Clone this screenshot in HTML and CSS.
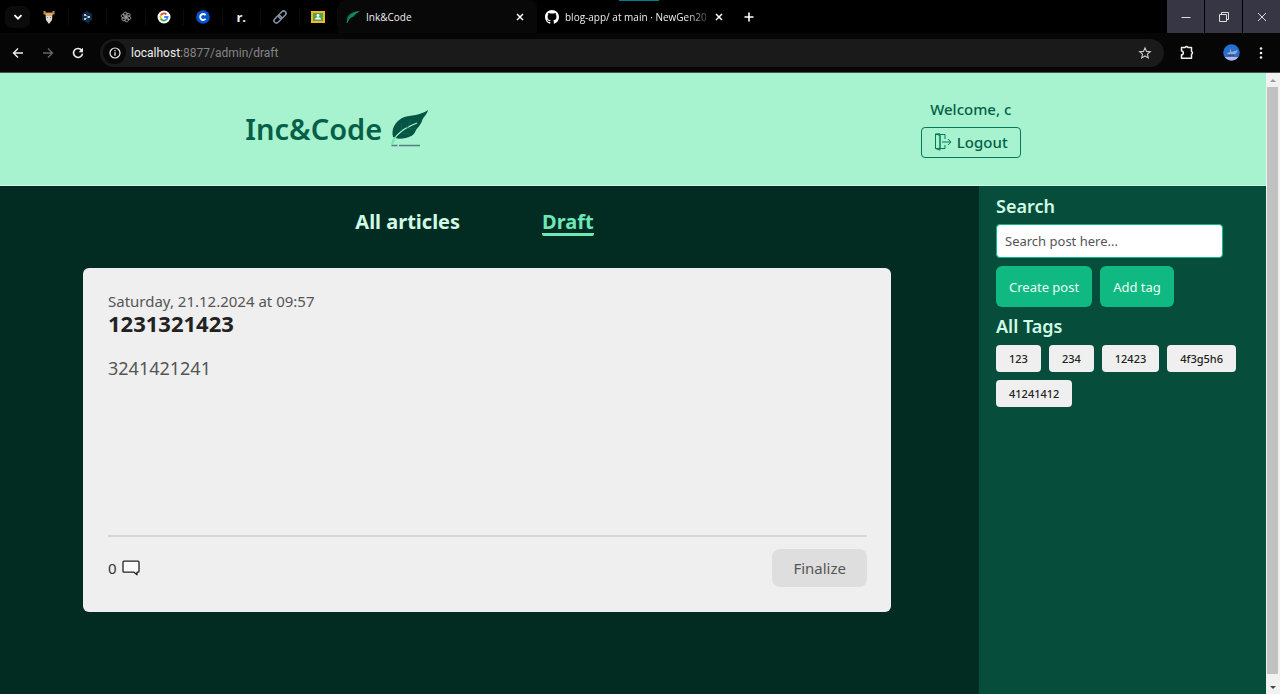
FILE: index.html
```
<!DOCTYPE html>
<html lang="en">
<head>
<meta charset="utf-8">
<title>Ink&amp;Code</title>
<link rel="stylesheet" href="styles.css">
</head>
<body>
<div class="browser">
  <div class="tabstrip">
    <div class="pinned">
      <button class="tab-search" aria-label="Search tabs"><svg width="10" height="10" viewBox="0 0 10 10"><path d="M1.500 3.200 5 6.700 8.500 3.200" fill="none" stroke="#fff" stroke-width="1.800"/></svg></button>
      <span class="pin"><svg width="14" height="14" viewBox="0 0 14 14"><path d="M2.500 1v2.500h9V1" fill="none" stroke="#c48a42" stroke-width="2"/><path d="M3.500 4h7L10 10l-3 4-3-4z" fill="#e0dad3"/><path d="M4 3h6v3H4z" fill="#dba96c"/><path d="M5 7h1v1H5zM8 7h1v1H8z" fill="#8c6c58"/></svg></span>
      <span class="pin"><svg width="12" height="14" viewBox="1 0 12 14"><path d="M2 4 7 1l5 3v6l-3 2v2l-3-2-4-2z" fill="#0f2b46"/><path d="m5 5 4 2-4 2" fill="none" stroke="#8fb5db" stroke-width=".8"/><circle cx="5" cy="5" r="1" fill="#e8f2ff"/><circle cx="9" cy="7" r="1" fill="#e8f2ff"/><circle cx="5" cy="9" r="1" fill="#e8f2ff"/></svg></span>
      <span class="pin"><svg width="10" height="10" viewBox="0 0 14 14"><g fill="none" stroke="#a8a8a8" stroke-width="1.200"><path id="petal" d="M7 7V3.200L9.700 1.700a2.500 2.500 0 0 1 2.600 3.900L9 7.500"/><use href="#petal" transform="rotate(60 7 7)"/><use href="#petal" transform="rotate(120 7 7)"/><use href="#petal" transform="rotate(180 7 7)"/><use href="#petal" transform="rotate(240 7 7)"/><use href="#petal" transform="rotate(300 7 7)"/></g></svg></span>
      <span class="pin"><svg width="14" height="14" viewBox="0 0 14 14"><circle cx="7" cy="7" r="6.500" fill="#fff"/><g fill="none" stroke-width="1.800"><path d="M9.500 4.400A3.600 3.600 0 0 0 3.900 5.200" stroke="#ea4335"/><path d="M3.900 5.200a3.600 3.600 0 0 0 0 3.600" stroke="#fbbc05"/><path d="M3.900 8.800a3.600 3.600 0 0 0 5.500.9" stroke="#34a853"/><path d="M9.400 9.700A3.600 3.600 0 0 0 10.600 7H7.200" stroke="#4285f4"/></g></svg></span>
      <span class="pin"><svg width="14" height="14" viewBox="0 0 14 14"><circle cx="7" cy="7" r="6.800" fill="#0056d2"/><path d="M9.600 8.800a3 3 0 1 1 0-3.600" fill="none" stroke="#fff" stroke-width="1.900"/></svg></span>
      <span class="pin pin-text">r.</span>
      <span class="pin"><svg width="14" height="14" viewBox="0 0 14 14"><g fill="none" stroke="#8595a5" stroke-width="1.500" transform="rotate(-45 7 7)"><rect x="-.5" y="4.600" width="8.500" height="4.800" rx="2.400"/><rect x="6" y="4.600" width="8.500" height="4.800" rx="2.400"/></g></svg></span>
      <span class="pin"><svg width="14" height="12" viewBox="0 0 14 12"><path fill="#f5ba18" d="M0 0h14v12H0z"/><path fill="#4fa55c" d="M2 2h10v8H2z"/><circle cx="7" cy="4.500" r="1.400" fill="#fff"/><path d="M4 8.500c0-3 6-3 6 0z" fill="#fff"/></svg></span>
    </div>
    <div class="tab active">
      <svg width="14" height="14" viewBox="0 0 14 14"><path d="M1 13C0 7 2 2 14 1c-2 2-4 2-5 4S6 7 4.500 8 2 10 1 13" fill="#0b7553"/><path d="M1 13C3 8 6 4 12 2" fill="none" stroke="#27b487" stroke-width=".7"/></svg>
      <span class="tab-title">Ink&amp;Code</span>
      <button class="tab-close" aria-label="Close Ink&amp;Code"><svg width="8" height="8" viewBox="0 0 8 8"><path d="m1 1 6 6M7 1 1 7" stroke="#fff" stroke-width="1.500"/></svg></button>
    </div>
    <div class="tab">
      <svg width="14" height="14" viewBox="0 0 16 16"><path fill="#fff" d="M8 0C3.580 0 0 3.580 0 8c0 3.540 2.290 6.530 5.470 7.590.4.070.55-.17.55-.38v-1.490c-2.010.37-2.530-.49-2.690-.94-.09-.23-.48-.94-.82-1.130-.28-.15-.68-.52-.01-.53.63-.01 1.080.58 1.230.82.72 1.210 1.870.87 2.330.66.070-.52.280-.87.510-1.070-1.780-.2-3.640-.89-3.640-3.950 0-.87.310-1.590.820-2.150-.08-.2-.36-1.020.080-2.120 0 0 .67-.21 2.200.82a7.600 7.600 0 0 1 4 0c1.530-1.040 2.200-.82 2.200-.82.440 1.100.160 1.920.080 2.120.510.560.820 1.270.820 2.150 0 3.070-1.870 3.750-3.650 3.950.290.250.540.730.540 1.480v2.200c0 .210.150.460.550.380A8 8 0 0 0 16 8c0-4.420-3.580-8-8-8"/></svg>
      <span class="tab-title faded">blog-app/ at main · NewGen20</span>
      <button class="tab-close" aria-label="Close blog-app"><svg width="8" height="8" viewBox="0 0 8 8"><path d="m1 1 6 6M7 1 1 7" stroke="#fff" stroke-width="1.500"/></svg></button>
    </div>
    <button class="new-tab" aria-label="New tab"><svg width="10" height="10" viewBox="0 0 10 10"><path d="M5 .5v9M.5 5h9" stroke="#fff" stroke-width="1.600"/></svg></button>
    <div class="window-buttons">
      <button aria-label="Minimize"><svg width="10" height="10" viewBox="0 0 10 10"><path d="M.5 5.500h9" stroke="#ddd"/></svg></button>
      <button aria-label="Restore"><svg width="10" height="10" viewBox="0 0 10 10"><path d="M.5 2.500h7v7h-7zM2.500 2.500v-2h7v7h-2" fill="none" stroke="#ddd"/></svg></button>
      <button aria-label="Close"><svg width="10" height="10" viewBox="0 0 10 10"><path d="m1 1 8 8M9 1 1 9" stroke="#ddd"/></svg></button>
    </div>
  </div>
  <div class="toolbar">
    <button class="tool" aria-label="Back"><svg width="12" height="12" viewBox="0 0 12 12"><path d="M11 6H1.500M6 1.500 1.500 6 6 10.500" fill="none" stroke="#eee" stroke-width="1.400"/></svg></button>
    <button class="tool" aria-label="Forward"><svg width="12" height="12" viewBox="0 0 12 12"><path d="M1 6h9.500M6 1.500 10.500 6 6 10.500" fill="none" stroke="#666" stroke-width="1.400"/></svg></button>
    <button class="tool" aria-label="Reload"><svg width="12" height="12" viewBox="0 0 12 12"><path d="M9.700 3.300A4.500 4.500 0 1 0 10.500 6.600" fill="none" stroke="#eee" stroke-width="1.600"/><path d="M11 .8v4.400H6.600z" fill="#eee"/></svg></button>
    <div class="address">
      <button class="site-info" aria-label="Site information"><svg width="12" height="12" viewBox="0 0 12 12"><circle cx="6" cy="6" r="5" fill="none" stroke="#eee" stroke-width="1.200"/><path d="M6 5.300v3.500M6 3v1.300" stroke="#eee" stroke-width="1.300"/></svg></button>
      <span class="url"><b>localhost</b>:8877/admin/draft</span>
      <button class="star" aria-label="Bookmark this page"><svg width="12" height="12" viewBox="0 0 12 12"><path d="m6 .9 1.500 3.500 3.800.3-2.900 2.500.9 3.700L6 9l-3.300 1.900.9-3.700L.7 4.700l3.800-.3z" fill="none" stroke="#ccc" stroke-width="1.100"/></svg></button>
    </div>
    <button class="extensions" aria-label="Extensions"><svg width="15" height="15" viewBox="0 0 15 15"><path d="M1.500 2.500h3.700a1.400 1.400 0 0 1 2.600 0h3.700v4a1.400 1.400 0 0 1 0 2.700v4h-10V9.700a1.700 1.700 0 0 0 0-3.600z" fill="none" stroke="#eee" stroke-width="1.500" stroke-linejoin="round"/></svg></button>
    <button class="profile" aria-label="Profile"><svg width="17" height="17" viewBox="0 0 17 17"><circle cx="8.500" cy="8.500" r="8.300" fill="#246fd0"/><path d="M1.800 13h13.400a8.200 8.200 0 0 1-13.400 0" fill="#c2b5dd"/><path d="m4 9 3-1V4l1.500 4L15 6l-2 3.500-3 1.500H5z" fill="#99a9c9"/><path d="M5 11h6" stroke="#24345c"/></svg></button>
    <button class="more" aria-label="Menu"><svg width="4" height="12" viewBox="0 0 4 12"><g fill="#eee"><circle cx="2" cy="1.500" r="1.300"/><circle cx="2" cy="6" r="1.300"/><circle cx="2" cy="10.500" r="1.300"/></g></svg></button>
  </div>
</div>
<div class="viewport">
  <div class="page">
    <header class="site-header">
      <div class="brand">
        <span>Inc&amp;Code</span>
        <svg width="40" height="40" viewBox="0 0 40 40"><path d="M3 28C1 20 5 13 12 9c6-3 18-2 26-8-1 5-5 7-6 11-2 5-4 6-6 9-2 6-7 7-10 8-5 1-10 1-13-1z" fill="#065443"/><path d="M3 32C8 23 15 19 27 14" fill="none" stroke="#a7f3d0" stroke-width="1.300"/><path d="m11 22 1-8m5 5 4-8m-9 13 7 1m-2-5 9-1" fill="none" stroke="#0b6d50" stroke-width=".8"/><path d="M4 28c-2 3-2 5-3 8l2-1c1-2 2-4 3-7z" fill="#6ee7b7"/><path d="M1.500 36.500h6M9 36.500h21" stroke="#587d82" stroke-width="1.600"/></svg>
      </div>
      <div class="user">
        <span>Welcome, c</span>
        <button class="logout"><svg width="18" height="18" viewBox="0 0 18 18"><path d="M6 1H1.500v14.500H6zM6 1l-4.500.5M1.500 15.500 6 17.200V2.500L1.500 1M6 1.500h5V6M11 12v3.500H6M8 9h9M14 6l3 3-3 3" fill="none" stroke="#047857" stroke-width="1"/></svg>Logout</button>
      </div>
    </header>
    <div class="columns">
      <main class="content">
        <nav class="views"><a href="#all">All articles</a><a href="#draft" class="current">Draft</a></nav>
        <article class="card">
          <time datetime="2024-12-21T09:57">Saturday, 21.12.2024 at 09:57</time>
          <h2>1231321423</h2>
          <p>3241421241</p>
          <footer class="card-footer">
            <button class="comments" aria-label="0 comments">0 <svg width="18" height="16" viewBox="0 0 18 16"><path d="M2 1.200h14q1 0 1 1v9q0 1-1 1h-1v2.600l-3-2.600H2q-1 0-1-1v-9q0-1 1-1z" fill="#fafafa" stroke="#222" stroke-width="1.300" stroke-linejoin="round"/></svg></button>
            <button class="finalize">Finalize</button>
          </footer>
        </article>
      </main>
      <aside class="sidebar">
        <label class="side-title" for="search">Search</label>
        <input class="search" id="search" type="text" placeholder="Search post here...">
        <div class="actions"><button>Create post</button><button>Add tag</button></div>
        <h3 class="side-title">All Tags</h3>
        <div class="tags"><button>123</button><button>234</button><button>12423</button><button>4f3g5h6</button><button>41241412</button></div>
      </aside>
    </div>
  </div>
  <div class="scrollbar" aria-hidden="true">
    <svg width="14" height="14" viewBox="0 0 14 14"><path d="m4 9 3-3 3 3z" fill="#999"/></svg>
    <span class="thumb"></span>
    <svg width="14" height="20" viewBox="0 0 14 20"><path d="m4 12 3 3 3-3z" fill="#444"/></svg>
  </div>
</div>
</body>
</html>
```
FILE: styles.css
```
* { box-sizing: border-box; }
body { margin: 0; min-height: 100vh; display: flex; flex-direction: column; font-family: "Noto Sans", sans-serif; background: #022c22; }
button { font: inherit; color: inherit; border: 0; padding: 0; background: none; }
h2, h3, p { margin: 0; }
svg { display: block; flex: none; overflow: visible; }

.browser { background: #060606; color: #eee; font-family: "Open Sans", "Noto Sans", sans-serif; border-bottom: 1px solid #41544c; }
.tabstrip { display: flex; height: 33px; background: linear-gradient(to right, transparent 619px, #007d8a 619px 659px, transparent 659px) top / 100% 1px no-repeat #000; }
.pinned { display: flex; align-items: center; width: 338px; padding-left: 5px; }
.tab-search { width: 25px; height: 22px; display: grid; place-items: center; border-radius: 7px; background: #0b0b0b; }
.pin { flex: 1; height: 16px; display: grid; place-items: center; border-right: 1px solid #0c0c0c; }
.pin-text { font: 700 13px/14px "Open Sans", sans-serif; }
.tab { display: flex; align-items: center; gap: 6px; width: 196px; margin-right: 2px; padding: 0 10px 0 6px; font-size: 10px; }
.tab.active { width: 199px; background: #080808; border-radius: 8px 8px 0 0; padding-left: 8px; }
.tab-title { flex: 1; white-space: nowrap; }
.faded { mask-image: linear-gradient(to right, #000 85%, #0004); }
.tab-close { width: 14px; height: 16px; display: grid; place-items: center; }
.new-tab { width: 24px; display: grid; place-items: center; }
.window-buttons { display: flex; gap: 1px; margin-left: auto; }
.window-buttons button { width: 37px; display: grid; place-items: center; background: #363645; }

.toolbar { display: flex; align-items: center; height: 39px; padding: 0 3px; }
.tool { width: 30px; height: 28px; display: grid; place-items: center; }
.address { flex: 1; display: flex; align-items: center; height: 28px; margin-left: 7px; border-radius: 14px; background: #1a1a1a; }
.site-info { width: 23px; height: 23px; margin: 0 5px 0 3px; display: grid; place-items: center; border-radius: 50%; background: #080808; }
.url { flex: 1; font: 12px Roboto, sans-serif; color: #858585; }
.url b { font-weight: 400; color: #eee; }
.star { margin-right: 13px; }
.extensions { width: 46px; display: grid; place-items: center; }
.profile { margin-left: 13px; }
.more { width: 32px; margin-left: 5px; display: grid; place-items: center; }

.viewport { flex: 1; display: flex; }
.page { flex: 1; display: flex; flex-direction: column; }
.site-header { display: flex; align-items: center; justify-content: space-around; min-height: 113px; color: #065f46; background: #a7f3d0; border-bottom: 1px solid #d1fae5; }
.brand { display: flex; align-items: center; gap: 8px; font-size: 29px; font-weight: 600; line-height: 40px; }
.user { display: flex; flex-direction: column; align-items: center; gap: 6px; padding-bottom: 4px; font-size: 15px; font-weight: 500; line-height: 24px; }
.logout { display: flex; align-items: center; gap: 5px; height: 31px; padding: 0 12px; border: 1px solid #047857; border-radius: 4px; }

.columns { flex: 1; display: flex; }
.content { flex: 1; padding: 0 88px 82px 83px; }
.views { display: flex; justify-content: center; gap: 82px; padding: 25px 25px 32px 0; font-size: 20px; font-weight: 700; line-height: 22px; color: #d1fae5; }
.views a { color: inherit; text-decoration: none; border-bottom: 3px solid transparent; border-radius: 2px; }
.views .current { color: #6ee7b7; border-color: #6ee7b7; }
.card { display: flex; flex-direction: column; min-height: 344px; padding: 22px 24px 25px 25px; color: #555; background: #efefef; border-radius: 6px; }
.card time { font-size: 15px; line-height: 22px; }
.card h2 { font-size: 22px; font-weight: 700; line-height: 22px; color: #222; }
.card p { margin-top: 22px; font-size: 18px; line-height: 24px; }
.card-footer { display: flex; align-items: center; justify-content: space-between; margin-top: auto; padding-top: 12px; border-top: 2px solid #d6d8d7; }
.comments { display: flex; align-items: center; gap: 5px; font-size: 15px; color: #333; }
.finalize { height: 38px; padding: 0 21px; font-size: 15px; background: #dedede; border-radius: 8px; }

.sidebar { width: 287px; padding: 6px 16px 6px 17px; background: #064e3b; }
.side-title { display: block; font-size: 18px; font-weight: 600; line-height: 28px; color: #d1fae5; }
.search { display: block; width: 227px; height: 34px; margin: 4px 0 8px; padding: 0 8px; font: 13px "Noto Sans", sans-serif; background: #fff; border: 1px solid #10b981; border-radius: 4px; }
.search::placeholder { color: #555; opacity: 1; }
.actions { display: flex; gap: 8px; margin-bottom: 5px; font-size: 13px; color: #ecfdf5; }
.actions button { height: 41px; padding: 0 13px; background: #10b981; border-radius: 6px; }
.tags { display: flex; flex-wrap: wrap; gap: 8px; margin-top: 5px; font-size: 11px; font-weight: 500; color: #222; }
.tags button { height: 27px; padding: 0 13px; background: #efefef; border-radius: 4px; }

.scrollbar { width: 14px; display: flex; flex-direction: column; background: #f1f1f1; }
.thumb { flex: 1; margin: 0 2px 0 1px; background: #c1c1c1; }
```
